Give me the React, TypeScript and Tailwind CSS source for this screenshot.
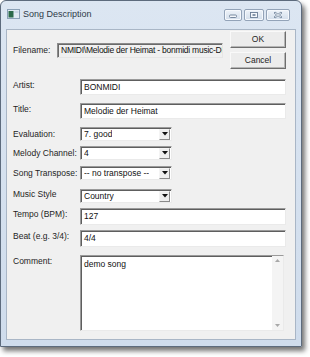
import React from "react";

const sunken =
  "bg-white border border-[#9a9a9a] border-r-[#eaeaea] border-b-[#eaeaea] shadow-[inset_1px_1px_0_#5e5e5e]";

function Label({ children, className = "" }: { children: React.ReactNode; className?: string }) {
  return <div className={`w-[67px] shrink-0 text-[8.5px] leading-[10px] text-[#1e1e1e] ${className}`}>{children}</div>;
}

function TextField({ value, height = 16 }: { value: string; height?: number }) {
  return (
    <div
      className={`${sunken} flex h-[16px] w-[206px] items-center px-[3px] text-[8.5px] text-[#111]`}
      style={{ height }}
    >
      {value}
    </div>
  );
}

function Combo({ value }: { value: string }) {
  return (
    <div className={`${sunken} flex h-[14px] w-[92px] items-center justify-between pl-[3px] pr-[1px] text-[8.5px] text-[#111]`}>
      <span className="truncate">{value}</span>
      <span className="flex h-[11px] w-[11px] items-center justify-center border border-[#f4f4f4] border-r-[#8a8a8a] border-b-[#8a8a8a] bg-[#eeeeee]">
        <svg width="6" height="4" viewBox="0 0 6 4">
          <path d="M0 0h6L3 3.5z" fill="#111" />
        </svg>
      </span>
    </div>
  );
}

function Button({ children }: { children: React.ReactNode }) {
  return (
    <div className="flex h-[17px] w-[56px] items-center justify-center border border-[#f9f9f9] border-r-[#6e6e6e] border-b-[#6e6e6e] bg-[#ececec] shadow-[inset_-1px_-1px_0_#b5b5b5] text-[8.5px] text-[#1e1e1e]">
      {children}
    </div>
  );
}

function CaptionButton({ kind }: { kind: "min" | "max" | "close" }) {
  return (
    <div
      className={`flex h-[12px] items-center justify-center rounded-[2px] border border-[#93a3b8] bg-gradient-to-b from-[#eef3f9] to-[#d3deeb] shadow-[inset_0_0_0_1px_#f5f8fc] ${
        kind === "close" ? "w-[24px]" : kind === "max" ? "w-[20px]" : "w-[18px]"
      }`}
    >
      <svg width="10" height="8" viewBox="0 0 10 8">
        {kind === "min" && <rect x="1.5" y="4" width="7" height="2.5" rx="1" fill="#f4f7fb" stroke="#6a7d95" strokeWidth="0.9" />}
        {kind === "max" && (
          <g>
            <rect x="1.5" y="1.5" width="7" height="5" fill="#f4f7fb" stroke="#6a7d95" strokeWidth="0.9" />
            <rect x="3.5" y="3.2" width="3" height="1.6" fill="#6a7d95" />
          </g>
        )}
        {kind === "close" && (
          <path d="M2 1l3 2.2L8 1l1 1-2.6 2L9 6l-1 1-3-2.2L2 7 1 6l2.6-2L1 2z" fill="#f4f7fb" stroke="#6a7d95" strokeWidth="0.8" />
        )}
      </svg>
    </div>
  );
}

export default function App() {
  return (
    <div className="h-[357px] w-[310px] bg-white font-['Liberation_Sans',Arial,sans-serif]">
      <div className="flex h-[347px] w-[302px] flex-col rounded-t-[6px] border border-[#5d6b7d] bg-gradient-to-b from-[#dce6f2] to-[#cfdcec] shadow-[3px_4px_5px_rgba(0,0,0,0.55)]">
        {/* title bar */}
        <div className="flex h-[28px] shrink-0 items-start pl-[6px] pr-[11px] pt-[7px]">
          <svg width="13" height="10" viewBox="0 0 13 10" className="mt-[1px]">
            <rect x="0.5" y="0.5" width="12" height="9" fill="#dfe9f2" stroke="#8aa0b6" />
            <rect x="1.5" y="2" width="5" height="6.5" fill="#2b6a4a" />
            <rect x="7.5" y="2" width="4" height="2" fill="#c8d6e4" />
          </svg>
          <span className="ml-[3px] text-[9px] leading-[13px] text-[#2e3a48]">Song Description</span>
          <div className="ml-auto flex gap-[2px] pt-[1px]">
            <CaptionButton kind="min" />
            <CaptionButton kind="max" />
            <CaptionButton kind="close" />
          </div>
        </div>

        {/* client area */}
        <div className="mx-[5px] mb-[6px] flex flex-1 flex-col border border-[#a9b6c6] bg-[#f0f0f0] pl-[6px] pr-[9px]">
          <div className="flex items-start justify-between">
            <div className="mt-[13px] flex items-center">
              <div className="w-[44px] text-[8.5px] text-[#1e1e1e]">Filename:</div>
              <div className="flex h-[15px] w-[166px] items-center overflow-hidden whitespace-nowrap border border-[#8c8c8c] border-r-[#e6e6e6] border-b-[#e6e6e6] bg-[#f0f0f0] px-[3px] text-[8.5px] tracking-[-0.25px] text-[#111] shadow-[inset_1px_1px_0_#6a6a6a]">
                NMIDI\Melodie der Heimat - bonmidi music-DE
              </div>
            </div>
            <div className="mt-[1px] flex flex-col gap-[4px]">
              <Button>OK</Button>
              <Button>Cancel</Button>
            </div>
          </div>

          <div className="mt-[10px] flex items-start">
            <Label className="pt-[1px]">Artist:</Label>
            <TextField value="BONMIDI" />
          </div>
          <div className="mt-[8px] flex items-start">
            <Label className="pt-[1px]">Title:</Label>
            <TextField value="Melodie der Heimat" />
          </div>
          <div className="mt-[8px] flex items-center">
            <Label>Evaluation:</Label>
            <Combo value="7. good" />
          </div>
          <div className="mt-[5px] flex items-center">
            <Label>Melody Channel:</Label>
            <Combo value="4" />
          </div>
          <div className="mt-[6px] flex items-center">
            <Label>Song Transpose:</Label>
            <Combo value="-- no transpose --" />
          </div>
          <div className="mt-[9px] flex items-start">
            <Label>Music Style</Label>
            <Combo value="Country" />
          </div>
          <div className="mt-[5px] flex items-start">
            <Label className="pt-[1px]">Tempo (BPM):</Label>
            <TextField value="127" height={17} />
          </div>
          <div className="mt-[5px] flex items-start">
            <Label className="pt-[1px]">Beat (e.g. 3/4):</Label>
            <TextField value="4/4" height={17} />
          </div>
          <div className="mt-[8px] flex items-start">
            <Label className="pt-[1px]">Comment:</Label>
            <div className={`${sunken} flex h-[76px] w-[204px]`}>
              <div className="flex-1 px-[3px] pt-[3px] text-[8.5px] leading-[10px] text-[#111]">demo song</div>
              <div className="flex w-[11px] flex-col items-center justify-between bg-[#f4f4f4] py-[3px]">
                <svg width="5" height="3" viewBox="0 0 5 3">
                  <path d="M0 3h5L2.5 0z" fill="#a8a8a8" />
                </svg>
                <svg width="5" height="3" viewBox="0 0 5 3">
                  <path d="M0 0h5L2.5 3z" fill="#a8a8a8" />
                </svg>
              </div>
            </div>
          </div>
        </div>
      </div>
    </div>
  );
}
